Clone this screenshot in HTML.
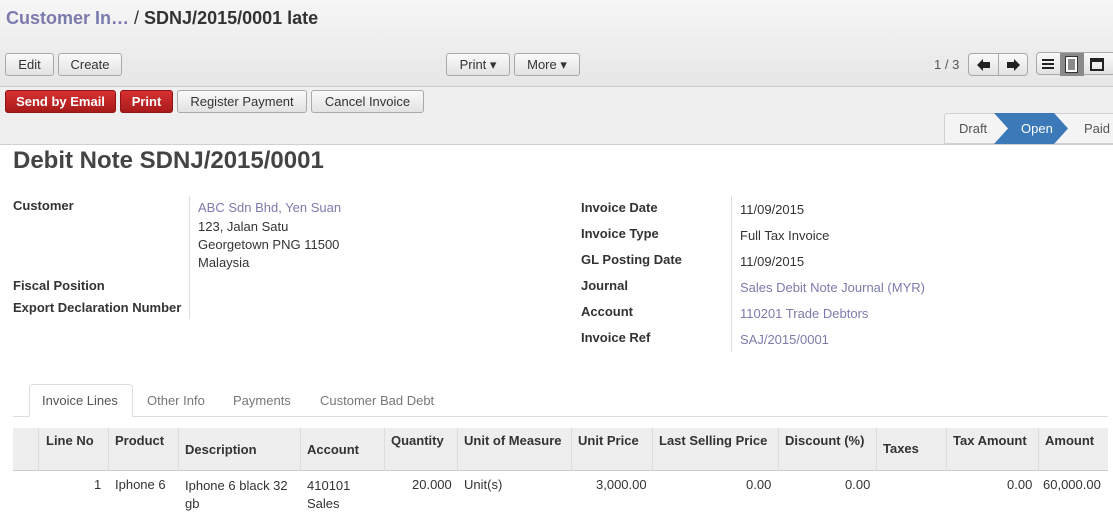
<!DOCTYPE html>
<html><head><style>
*{box-sizing:border-box;margin:0;padding:0}
body{width:1113px;height:514px;overflow:hidden;font-family:"Liberation Sans",Arial,sans-serif;font-size:13px;color:#333;background:#fff;position:relative}
.a{position:absolute}
.top{left:0;top:0;width:1113px;height:87px;background:linear-gradient(#f6f6f6,#e6e6e6);border-bottom:1px solid #cacaca}
.bar2{left:0;top:87px;width:1113px;height:58px;background:#efefef;border-bottom:1px solid #d0d0d0}
.btn{position:absolute;height:23px;border:1px solid #a9a9a9;border-radius:3px;background:linear-gradient(#fafafa,#e2e2e2);font-size:13px;line-height:21px;text-align:center;color:#333}
.red{background:linear-gradient(#d8302f,#a81b1b);border-color:#8d1616;color:#fff;font-weight:bold}
.lbl{position:absolute;font-weight:bold;font-size:13px}
.val{position:absolute;font-size:13px}
.lnk{color:#7c7bad}
.h{position:absolute;font-weight:bold;font-size:13px;top:433px}
.vl{position:absolute;top:428px;width:1px;height:43px;background:#ddd}
</style></head><body>
<div class="a top"></div>
<div class="a bar2"></div>
<div class="a" style="left:6px;top:8px;font-size:18px;font-weight:bold;color:#7c7bad">Customer In… <span style="color:#333;font-weight:normal">/</span> <span style="color:#333">SDNJ/2015/0001 late</span></div>
<div class="btn" style="left:5px;top:53px;width:49px">Edit</div>
<div class="btn" style="left:58px;top:53px;width:64px">Create</div>
<div class="btn" style="left:446px;top:53px;width:64px">Print ▾</div>
<div class="btn" style="left:514px;top:53px;width:66px">More ▾</div>
<div class="a" style="left:934px;top:57px;color:#555">1 / 3</div>
<div class="btn" style="left:968px;top:53px;width:60px;border-radius:4px"></div>
<div class="a" style="left:998px;top:54px;width:1px;height:21px;background:#aaa"></div>
<svg class="a" style="left:977px;top:59px" width="14" height="12"><polygon points="0,6 6,0 6,3 13,3 13,9 6,9 6,12" fill="#222"/></svg>
<svg class="a" style="left:1006px;top:59px" width="14" height="12"><polygon points="14,6 8,0 8,3 1,3 1,9 8,9 8,12" fill="#222"/></svg>
<div class="btn" style="left:1036px;top:52px;width:80px;border-radius:4px"></div>
<div class="a" style="left:1060px;top:53px;width:24px;height:23px;background:#8a8a8a"></div>
<div class="a" style="left:1042px;top:59px;width:12px;height:2px;background:#222;box-shadow:0 4px 0 #222,0 8px 0 #222"></div>
<div class="a" style="left:1066px;top:57px;width:11px;height:15px;border:2px solid #fff;outline:1px solid #333"></div>
<div class="a" style="left:1090px;top:58px;width:14px;height:13px;border:2px solid #222;border-top-width:4px"></div>
<div class="btn red" style="left:5px;top:90px;width:111px">Send by Email</div>
<div class="btn red" style="left:120px;top:90px;width:53px">Print</div>
<div class="btn" style="left:177px;top:90px;width:130px">Register Payment</div>
<div class="btn" style="left:311px;top:90px;width:113px">Cancel Invoice</div>
<div class="a" style="left:944px;top:113px;width:169px;height:31px;background:#f4f4f4;border:1px solid #d0d0d0;border-right:none;border-radius:3px 0 0 0"></div>
<div class="a" style="left:959px;top:121px;color:#555">Draft</div>
<svg class="a" style="left:994px;top:113px" width="75" height="31"><polygon points="0,0 60,0 74,15.5 60,31 0,31 14,15.5" fill="#3c79b8"/></svg>
<div class="a" style="left:1021px;top:121px;color:#fff">Open</div>
<div class="a" style="left:1084px;top:121px;color:#555">Paid</div>
<div class="a" style="left:13px;top:147px;font-size:24px;font-weight:bold;color:#444">Debit Note SDNJ/2015/0001</div>
<div class="lbl" style="left:13px;top:198px">Customer</div>
<div class="lbl" style="left:13px;top:278px">Fiscal Position</div>
<div class="lbl" style="left:13px;top:300px">Export Declaration Number</div>
<div class="a" style="left:189px;top:196px;width:1px;height:123px;background:#ddd"></div>
<div class="val lnk" style="left:198px;top:200px">ABC Sdn Bhd, Yen Suan</div>
<div class="val" style="left:198px;top:218px;line-height:18px">123, Jalan Satu<br>Georgetown PNG 11500<br>Malaysia</div>
<div class="lbl" style="left:581px;top:200px">Invoice Date</div>
<div class="lbl" style="left:581px;top:226px">Invoice Type</div>
<div class="lbl" style="left:581px;top:252px">GL Posting Date</div>
<div class="lbl" style="left:581px;top:278px">Journal</div>
<div class="lbl" style="left:581px;top:304px">Account</div>
<div class="lbl" style="left:581px;top:330px">Invoice Ref</div>
<div class="a" style="left:731px;top:196px;width:1px;height:156px;background:#ddd"></div>
<div class="val" style="left:740px;top:202px">11/09/2015</div>
<div class="val" style="left:740px;top:228px">Full Tax Invoice</div>
<div class="val" style="left:740px;top:254px">11/09/2015</div>
<div class="val lnk" style="left:740px;top:280px">Sales Debit Note Journal (MYR)</div>
<div class="val lnk" style="left:740px;top:306px">110201 Trade Debtors</div>
<div class="val lnk" style="left:740px;top:332px">SAJ/2015/0001</div>
<div class="a" style="left:13px;top:416px;width:1095px;height:1px;background:#ddd"></div>
<div class="a" style="left:29px;top:384px;width:104px;height:33px;background:#fff;border:1px solid #ddd;border-bottom:none;border-radius:4px 4px 0 0"></div>
<div class="a" style="left:42px;top:393px;color:#555">Invoice Lines</div>
<div class="a" style="left:147px;top:393px;color:#777">Other Info</div>
<div class="a" style="left:233px;top:393px;color:#777">Payments</div>
<div class="a" style="left:320px;top:393px;color:#777">Customer Bad Debt</div>
<div class="a" style="left:13px;top:428px;width:1095px;height:43px;background:#eee;border-bottom:1px solid #ccc"></div>
<div class="vl" style="left:38px"></div><div class="vl" style="left:108px"></div><div class="vl" style="left:178px"></div><div class="vl" style="left:300px"></div><div class="vl" style="left:384px"></div><div class="vl" style="left:457px"></div><div class="vl" style="left:571px"></div><div class="vl" style="left:652px"></div><div class="vl" style="left:778px"></div><div class="vl" style="left:876px"></div><div class="vl" style="left:946px"></div><div class="vl" style="left:1038px"></div>
<div class="h" style="left:46px">Line No</div>
<div class="h" style="left:115px">Product</div>
<div class="h" style="left:185px;top:442px">Description</div>
<div class="h" style="left:307px;top:442px">Account</div>
<div class="h" style="left:391px">Quantity</div>
<div class="h" style="left:464px">Unit of Measure</div>
<div class="h" style="left:578px">Unit Price</div>
<div class="h" style="left:659px">Last Selling Price</div>
<div class="h" style="left:785px">Discount (%)</div>
<div class="h" style="left:883px;top:441px">Taxes</div>
<div class="h" style="left:953px">Tax Amount</div>
<div class="h" style="left:1045px">Amount</div>
<div class="val" style="left:94px;top:477px">1</div>
<div class="val" style="left:115px;top:477px">Iphone 6</div>
<div class="val" style="left:185px;top:477px;line-height:18px">Iphone 6 black 32<br>gb</div>
<div class="val" style="left:307px;top:477px;line-height:18px">410101<br>Sales</div>
<div class="val" style="left:412px;top:477px">20.000</div>
<div class="val" style="left:464px;top:477px">Unit(s)</div>
<div class="val" style="left:596px;top:477px">3,000.00</div>
<div class="val" style="left:746px;top:477px">0.00</div>
<div class="val" style="left:845px;top:477px">0.00</div>
<div class="val" style="left:1007px;top:477px">0.00</div>
<div class="val" style="left:1043px;top:477px">60,000.00</div>
</body></html>
